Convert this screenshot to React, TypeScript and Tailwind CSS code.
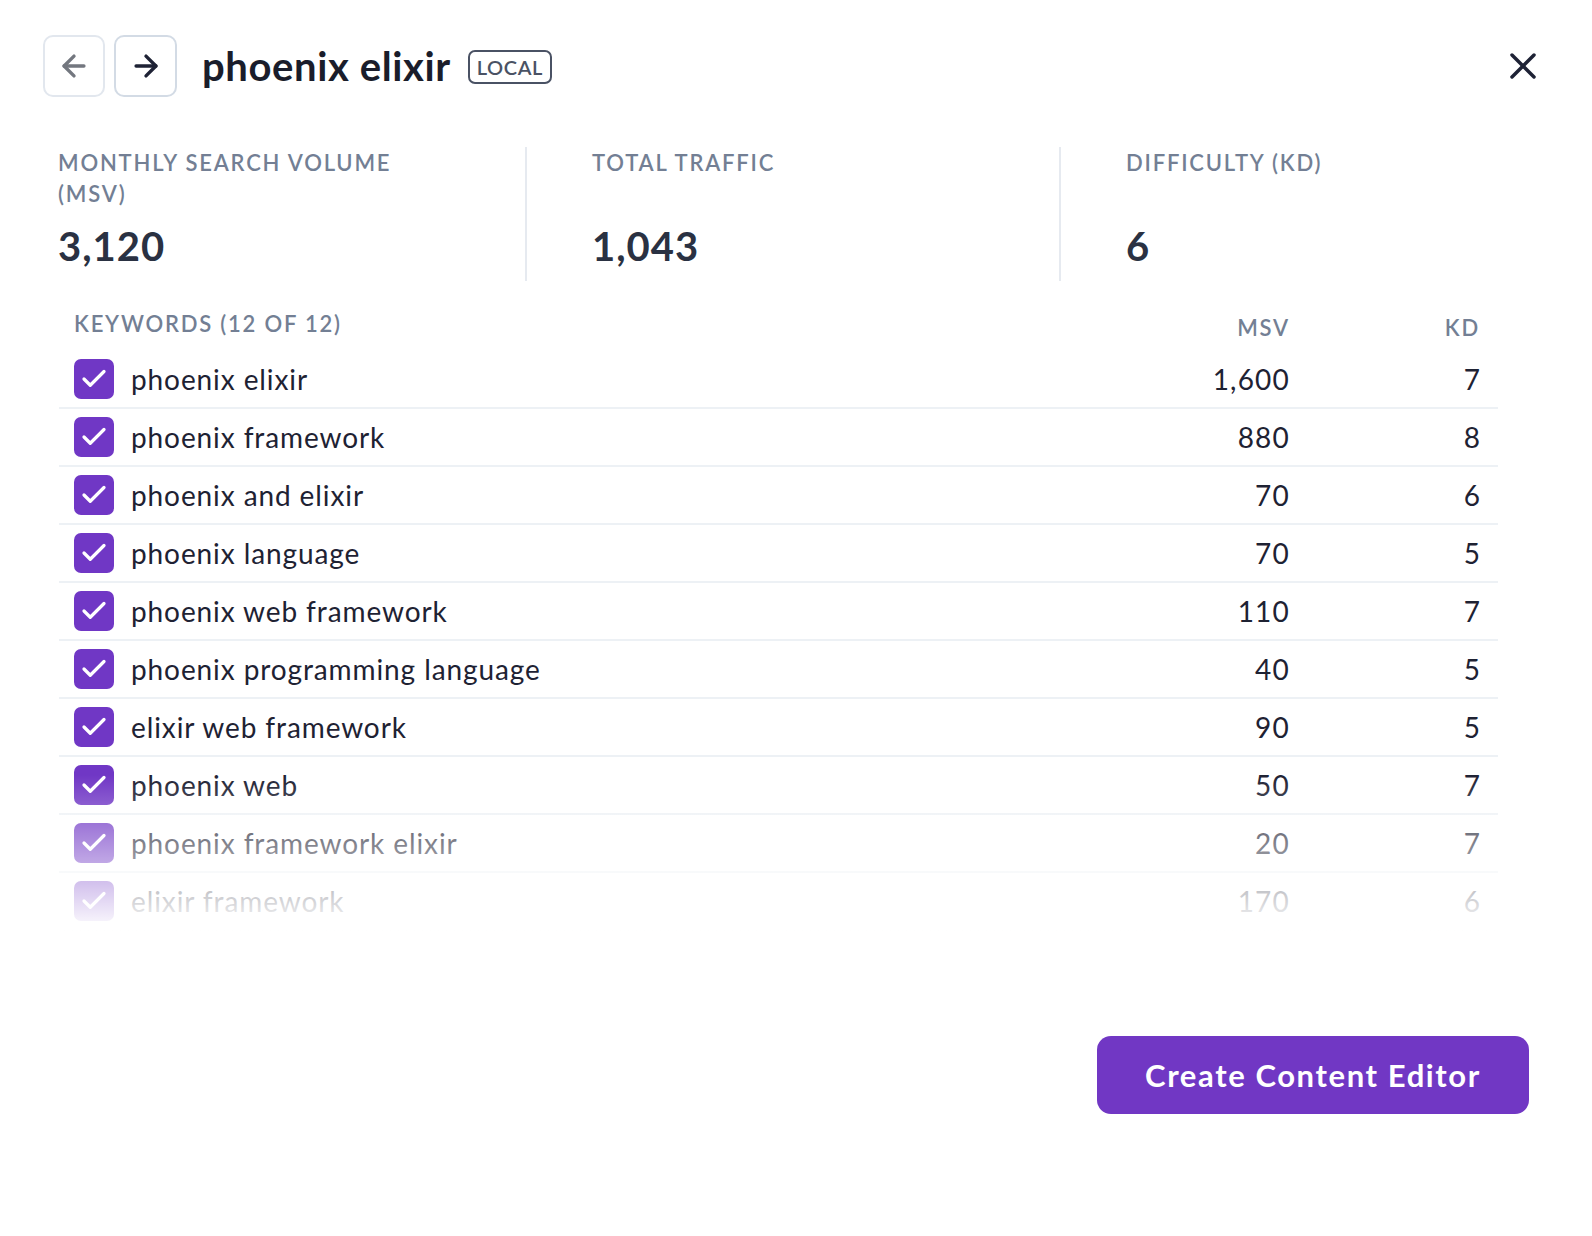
import { Check, X, ArrowLeft, ArrowRight } from 'lucide-react';

const keywords = [
  { term: 'phoenix elixir', msv: '1,600', kd: 7 },
  { term: 'phoenix framework', msv: '880', kd: 8 },
  { term: 'phoenix and elixir', msv: '70', kd: 6 },
  { term: 'phoenix language', msv: '70', kd: 5 },
  { term: 'phoenix web framework', msv: '110', kd: 7 },
  { term: 'phoenix programming language', msv: '40', kd: 5 },
  { term: 'elixir web framework', msv: '90', kd: 5 },
  { term: 'phoenix web', msv: '50', kd: 7 },
  { term: 'phoenix framework elixir', msv: '20', kd: 7 },
  { term: 'elixir framework', msv: '170', kd: 6 },
  { term: 'elixir phoenix tutorial', msv: '30', kd: 4 },
  { term: 'phoenix liveview', msv: '40', kd: 6 },
];

const stats = [
  { label: 'Monthly Search Volume (MSV)', value: '3,120' },
  { label: 'Total Traffic', value: '1,043' },
  { label: 'Difficulty (KD)', value: '6' },
];

export default function App() {
  return (
    <div className="min-h-[1236px] bg-white px-[43px] pt-[35px] font-['Lato','Open_Sans',sans-serif] text-[#1c2030]">
      {/* Header */}
      <header className="flex h-[62px] items-center">
        <button className="flex h-[62px] w-[62px] items-center justify-center rounded-[10px] border-2 border-[#e2e7ee] text-[#73777f]">
          <ArrowLeft size={34} strokeWidth={2.4} />
        </button>
        <button className="ml-[9px] flex h-[62px] w-[63px] items-center justify-center rounded-[10px] border-2 border-[#d3dbe5] text-[#1e2235]">
          <ArrowRight size={34} strokeWidth={2.4} />
        </button>
        <h1 className="ml-[25px] text-[40px] font-bold leading-none tracking-[0.6px] text-[#1a1d2b]">phoenix elixir</h1>
        <span className="ml-[17px] mt-[2px] flex h-[34px] items-center rounded-[7px] border-2 border-[#4a5264] px-[7px] text-[20px] font-semibold tracking-[0.6px] text-[#4a5264]">
          LOCAL
        </span>
        <button className="ml-auto mr-[4px] text-[#1e2235]">
          <X size={44} strokeWidth={1.9} />
        </button>
      </header>

      {/* Stats */}
      <section className="mt-[50px] flex h-[134px] pl-[15px]">
        {stats.map((s, i) => (
          <div
            key={s.label}
            className={
              i === 0
                ? 'w-[469px] border-r-2 border-[#e6eaf0]'
                : i === 1
                  ? 'w-[534px] border-r-2 border-[#e6eaf0] pl-[65px]'
                  : 'pl-[65px]'
            }
          >
            <div className="h-[62px] max-w-[360px] text-[22px] font-semibold uppercase leading-[31px] tracking-[1.8px] text-[#737f94]">
              {s.label}
            </div>
            <div className="mt-[13px] text-[40px] font-bold leading-[48px] tracking-[1px] text-[#2a3142]">{s.value}</div>
          </div>
        ))}
      </section>

      {/* Keywords table */}
      <section className="ml-[16px] w-[1439px]">
        <div className="flex h-[70px] items-start pl-[15px] pr-[18px] pt-[27px] text-[22px] font-semibold uppercase leading-[31px] tracking-[1.8px] text-[#737f94]">
          <span className="flex-1">Keywords (12 of 12)</span>
          <span className="mt-[4px] w-[150px] text-right">MSV</span>
          <span className="mt-[4px] w-[190px] text-right">KD</span>
        </div>
        <div className="relative h-[580px] overflow-hidden">
          {keywords.map((k) => (
            <div key={k.term} className="flex h-[58px] items-center border-b-2 border-[#edf1f5] pl-[15px] pr-[18px]">
              <span className="flex h-[40px] w-[40px] items-center justify-center rounded-[7px] bg-[#7037c5] text-white">
                <Check size={30} strokeWidth={2.6} />
              </span>
              <span className="ml-[17px] flex-1 text-[28px] leading-none tracking-[0.9px] text-[#1e2233]">{k.term}</span>
              <span className="w-[150px] text-right text-[28px] leading-none tracking-[1.2px] text-[#1e2233]">{k.msv}</span>
              <span className="w-[190px] text-right text-[28px] leading-none text-[#1e2233]">{k.kd}</span>
            </div>
          ))}
          <div className="pointer-events-none absolute inset-x-0 bottom-0 h-[156px] bg-gradient-to-b from-white/0 to-white" />
        </div>
      </section>

      {/* Footer */}
      <div className="mt-[105px] flex justify-end pr-[20px]">
        <button className="h-[78px] w-[432px] rounded-[14px] bg-[#7137c4] text-[31px] font-bold tracking-[1.6px] text-white">
          Create Content Editor
        </button>
      </div>
    </div>
  );
}
